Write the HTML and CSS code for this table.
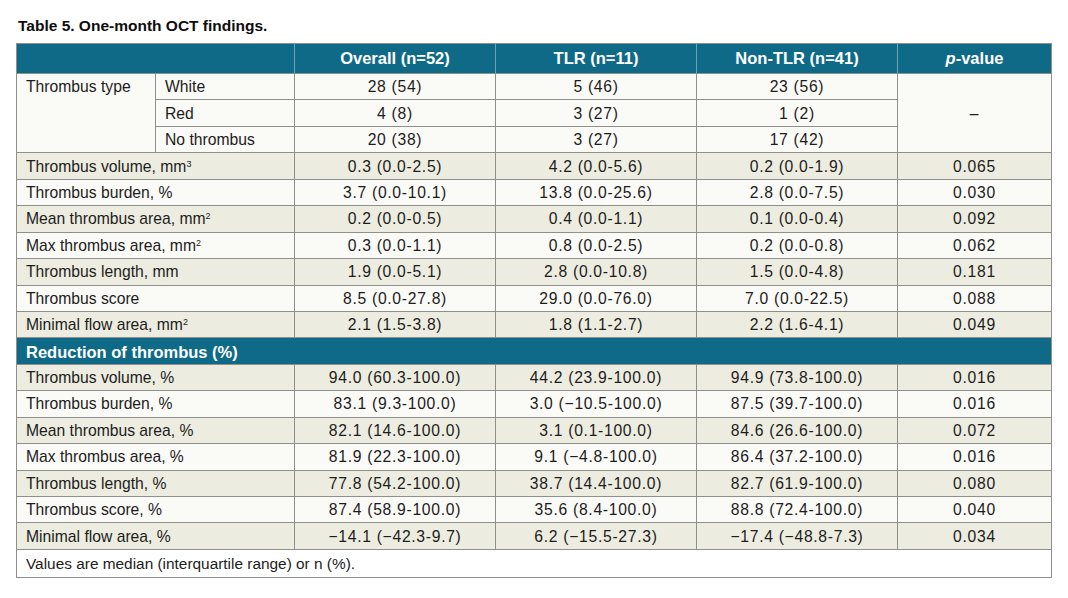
FILE: index.html
```html
<!DOCTYPE html>
<html lang="en">
<head>
<meta charset="utf-8">
<title>Table 5. One-month OCT findings.</title>
<link rel="stylesheet" href="styles.css">
</head>
<body>
<div class="page">
  <h1 class="title">Table 5. One-month OCT findings.</h1>
  <table class="tbl">
    <colgroup>
      <col class="c-a"><col class="c-b"><col class="c-n"><col class="c-n"><col class="c-n"><col class="c-p">
    </colgroup>
    <thead>
      <tr class="head">
        <th colspan="2"></th>
        <th>Overall (n=52)</th>
        <th>TLR (n=11)</th>
        <th>Non-TLR (n=41)</th>
        <th><i>p</i>-value</th>
      </tr>
    </thead>
    <tbody>
      <tr class="w">
        <td rowspan="3" class="lbl top">Thrombus type</td>
        <td class="lbl">White</td>
        <td class="num">28 (54)</td><td class="num">5 (46)</td><td class="num">23 (56)</td>
        <td rowspan="3" class="num">–</td>
      </tr>
      <tr class="w">
        <td class="lbl">Red</td>
        <td class="num">4 (8)</td><td class="num">3 (27)</td><td class="num">1 (2)</td>
      </tr>
      <tr class="w">
        <td class="lbl">No thrombus</td>
        <td class="num">20 (38)</td><td class="num">3 (27)</td><td class="num">17 (42)</td>
      </tr>
      <tr class="s"><td colspan="2" class="lbl">Thrombus volume, mm<sup>3</sup></td><td class="num">0.3 (0.0-2.5)</td><td class="num">4.2 (0.0-5.6)</td><td class="num">0.2 (0.0-1.9)</td><td class="num">0.065</td></tr>
      <tr class="w"><td colspan="2" class="lbl">Thrombus burden, %</td><td class="num">3.7 (0.0-10.1)</td><td class="num">13.8 (0.0-25.6)</td><td class="num">2.8 (0.0-7.5)</td><td class="num">0.030</td></tr>
      <tr class="s"><td colspan="2" class="lbl">Mean thrombus area, mm<sup>2</sup></td><td class="num">0.2 (0.0-0.5)</td><td class="num">0.4 (0.0-1.1)</td><td class="num">0.1 (0.0-0.4)</td><td class="num">0.092</td></tr>
      <tr class="w"><td colspan="2" class="lbl">Max thrombus area, mm<sup>2</sup></td><td class="num">0.3 (0.0-1.1)</td><td class="num">0.8 (0.0-2.5)</td><td class="num">0.2 (0.0-0.8)</td><td class="num">0.062</td></tr>
      <tr class="s"><td colspan="2" class="lbl">Thrombus length, mm</td><td class="num">1.9 (0.0-5.1)</td><td class="num">2.8 (0.0-10.8)</td><td class="num">1.5 (0.0-4.8)</td><td class="num">0.181</td></tr>
      <tr class="w"><td colspan="2" class="lbl">Thrombus score</td><td class="num">8.5 (0.0-27.8)</td><td class="num">29.0 (0.0-76.0)</td><td class="num">7.0 (0.0-22.5)</td><td class="num">0.088</td></tr>
      <tr class="s"><td colspan="2" class="lbl">Minimal flow area, mm<sup>2</sup></td><td class="num">2.1 (1.5-3.8)</td><td class="num">1.8 (1.1-2.7)</td><td class="num">2.2 (1.6-4.1)</td><td class="num">0.049</td></tr>
      <tr class="section"><td colspan="6">Reduction of thrombus (%)</td></tr>
      <tr class="s"><td colspan="2" class="lbl">Thrombus volume, %</td><td class="num">94.0 (60.3-100.0)</td><td class="num">44.2 (23.9-100.0)</td><td class="num">94.9 (73.8-100.0)</td><td class="num">0.016</td></tr>
      <tr class="w"><td colspan="2" class="lbl">Thrombus burden, %</td><td class="num">83.1 (9.3-100.0)</td><td class="num">3.0 (−10.5-100.0)</td><td class="num">87.5 (39.7-100.0)</td><td class="num">0.016</td></tr>
      <tr class="s"><td colspan="2" class="lbl">Mean thrombus area, %</td><td class="num">82.1 (14.6-100.0)</td><td class="num">3.1 (0.1-100.0)</td><td class="num">84.6 (26.6-100.0)</td><td class="num">0.072</td></tr>
      <tr class="w"><td colspan="2" class="lbl">Max thrombus area, %</td><td class="num">81.9 (22.3-100.0)</td><td class="num">9.1 (−4.8-100.0)</td><td class="num">86.4 (37.2-100.0)</td><td class="num">0.016</td></tr>
      <tr class="s"><td colspan="2" class="lbl">Thrombus length, %</td><td class="num">77.8 (54.2-100.0)</td><td class="num">38.7 (14.4-100.0)</td><td class="num">82.7 (61.9-100.0)</td><td class="num">0.080</td></tr>
      <tr class="w"><td colspan="2" class="lbl">Thrombus score, %</td><td class="num">87.4 (58.9-100.0)</td><td class="num">35.6 (8.4-100.0)</td><td class="num">88.8 (72.4-100.0)</td><td class="num">0.040</td></tr>
      <tr class="s"><td colspan="2" class="lbl">Minimal flow area, %</td><td class="num">−14.1 (−42.3-9.7)</td><td class="num">6.2 (−15.5-27.3)</td><td class="num">−17.4 (−48.8-7.3)</td><td class="num">0.034</td></tr>
      <tr class="foot"><td colspan="6" class="lbl">Values are median (interquartile range) or n (%).</td></tr>
    </tbody>
  </table>
</div>
</body>
</html>
```

FILE: styles.css
```css
html, body {
  margin: 0;
  padding: 0;
  background: #ffffff;
}

.page {
  padding: 16px 17px 0 16px;
  font-family: "Liberation Sans", Arial, sans-serif;
  color: #1e1c1c;
}

.title {
  margin: 0 0 8px 2px;
  font-size: 15.5px;
  line-height: 19px;
  font-weight: bold;
  color: #0d0d0d;
}

.tbl {
  width: 1035px;
  border-collapse: collapse;
  table-layout: fixed;
  border: 1px solid #8f8f8b;
  font-size: 15.7px;
}

.c-a { width: 139px; }
.c-b { width: 139px; }
.c-n { width: 201px; }
.c-p { width: 154px; }

.head th {
  height: 29px;
  padding: 0 8px;
  background: #0e6a86;
  color: #ffffff;
  font-size: 16.5px;
  font-weight: bold;
  text-align: center;
  border-left: 1px solid #6fa3b4;
  border-bottom: 1px solid #8f8f8b;
}

.head th:first-child {
  border-left: none;
}

.tbl td {
  height: 24.45px;
  padding: 1px 9px 0;
  border: 1px solid #8f8f8b;
  vertical-align: middle;
  line-height: 18px;
  white-space: nowrap;
}

.tbl tr.w td { background: #fafaf7; }
.tbl tr.s td { background: #ecede0; }

.tbl td.top { vertical-align: top; padding-top: 4px; }

.tbl td.num {
  text-align: center;
  letter-spacing: 0.7px;
}

.tbl sup {
  font-size: 9px;
  line-height: 0;
  vertical-align: 5px;
}

.tbl tr.section td {
  background: #0e6a86;
  color: #ffffff;
  font-weight: bold;
  font-size: 16.5px;
  padding-left: 9px;
}

.tbl tr.foot td {
  background: #ffffff;
  height: 26px;
  font-size: 15.4px;
}
```
